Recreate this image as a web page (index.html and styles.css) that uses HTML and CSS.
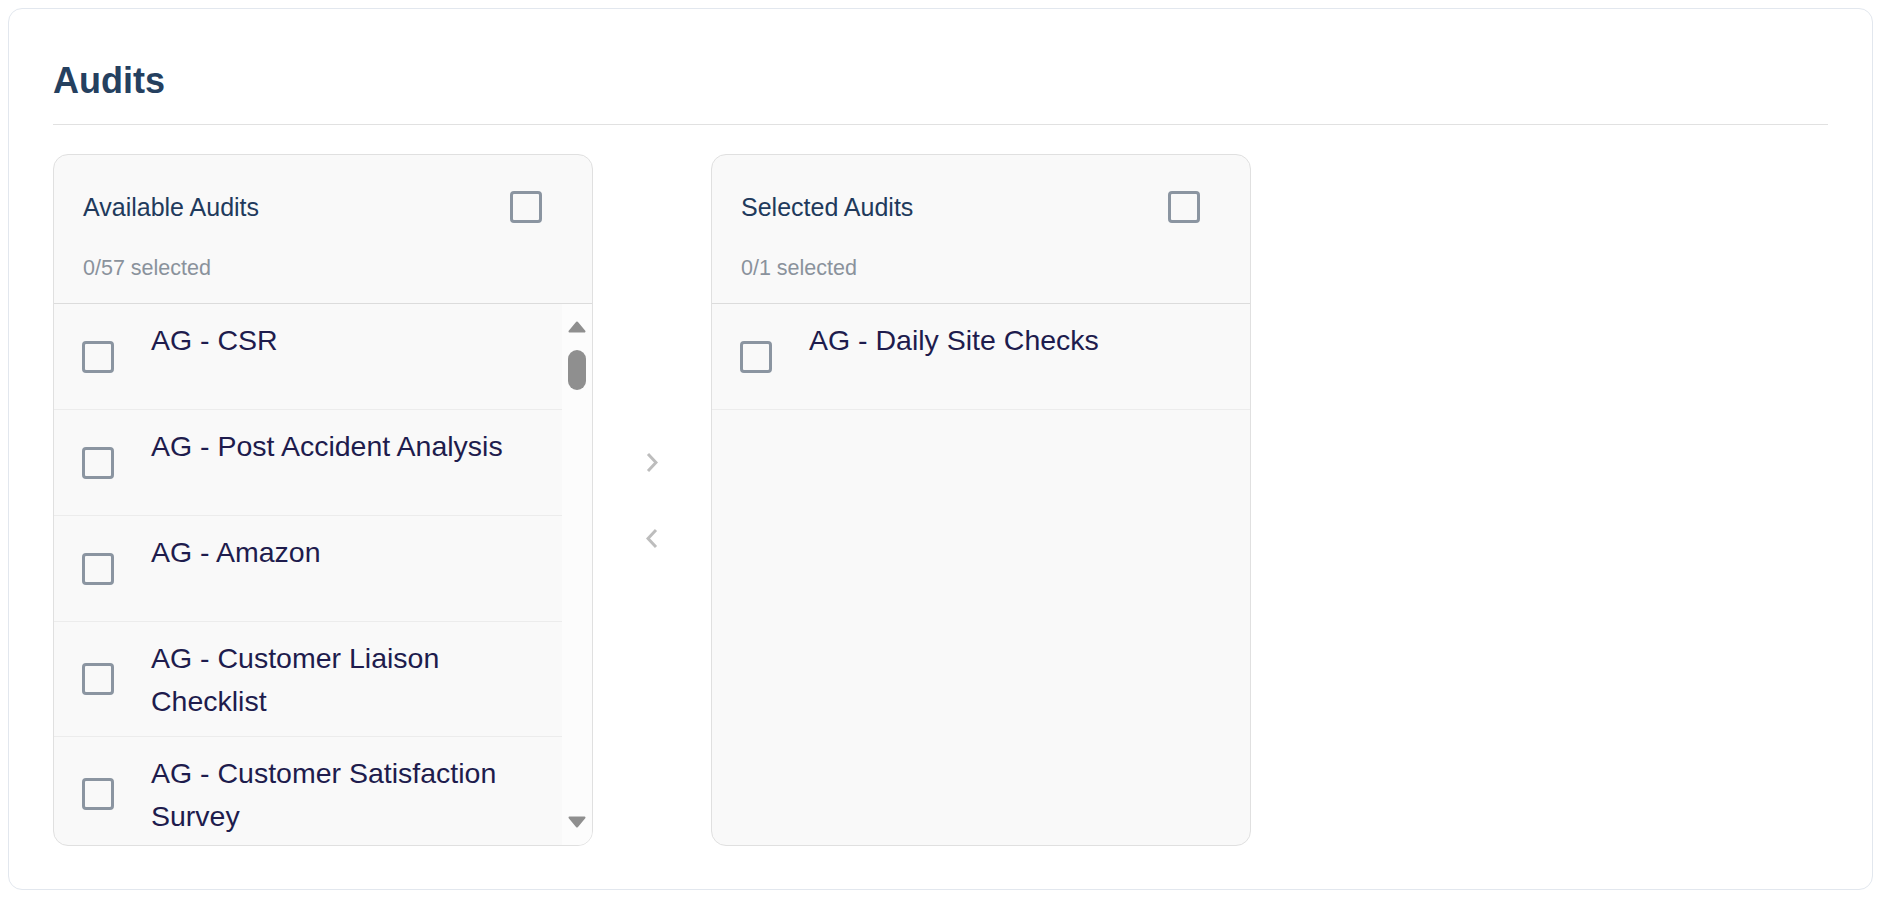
FILE: index.html
```html
<!DOCTYPE html>
<html lang="en">
<head>
<meta charset="UTF-8" />
<meta name="viewport" content="width=device-width, initial-scale=1" />
<title>Audits</title>
<link rel="stylesheet" href="styles.css">
</head>
<body>
  <div class="page">
    <section class="card" aria-label="Audits">
      <h1 class="card-title">Audits</h1>

      <div class="transfer">
        <!-- Available list -->
        <div class="panel">
          <div class="panel-head">
            <div class="panel-head-row">
              <span class="panel-title">Available Audits</span>
              <span class="check"></span>
            </div>
            <div class="panel-count">0/57 selected</div>
          </div>
          <div class="panel-body">
            <ul class="items">
              <li class="item"><span class="check"></span><span class="item-label">AG - CSR</span></li>
              <li class="item"><span class="check"></span><span class="item-label">AG - Post Accident Analysis</span></li>
              <li class="item"><span class="check"></span><span class="item-label">AG - Amazon</span></li>
              <li class="item"><span class="check"></span><span class="item-label">AG - Customer Liaison Checklist</span></li>
              <li class="item"><span class="check"></span><span class="item-label">AG - Customer Satisfaction Survey</span></li>
            </ul>
            <div class="scrollbar" aria-hidden="true">
              <svg class="scroll-arrow" width="18" height="12" viewBox="0 0 18 12"><path d="M9 1.5 L16.5 10.5 L1.5 10.5 Z" fill="#8f8f8f" stroke="#8f8f8f" stroke-width="2" stroke-linejoin="round"/></svg>
              <div class="scroll-thumb"></div>
              <div class="scroll-space"></div>
              <svg class="scroll-arrow" width="18" height="12" viewBox="0 0 18 12"><path d="M9 10.5 L16.5 1.5 L1.5 1.5 Z" fill="#8f8f8f" stroke="#8f8f8f" stroke-width="2" stroke-linejoin="round"/></svg>
            </div>
          </div>
        </div>

        <!-- Move buttons -->
        <div class="moves">
          <button class="move-btn" aria-label="Move right">
            <svg width="12" height="21" viewBox="0 0 12 21"><path d="M2 2 L10 10.5 L2 19" fill="none" stroke="#bdbdbd" stroke-width="3"/></svg>
          </button>
          <button class="move-btn" aria-label="Move left">
            <svg width="12" height="21" viewBox="0 0 12 21"><path d="M10 2 L2 10.5 L10 19" fill="none" stroke="#bdbdbd" stroke-width="3"/></svg>
          </button>
        </div>

        <!-- Selected list -->
        <div class="panel">
          <div class="panel-head">
            <div class="panel-head-row">
              <span class="panel-title">Selected Audits</span>
              <span class="check"></span>
            </div>
            <div class="panel-count">0/1 selected</div>
          </div>
          <div class="panel-body">
            <ul class="items">
              <li class="item"><span class="check"></span><span class="item-label">AG - Daily Site Checks</span></li>
            </ul>
          </div>
        </div>
      </div>
    </section>
  </div>
</body>
</html>
```

FILE: styles.css
```css
/* Base */
* {
  box-sizing: border-box;
}
html, body {
  margin: 0;
  padding: 0;
  background: #fff;
  font-family: "Liberation Sans", Arial, sans-serif;
}

.page {
  padding: 8px 13px 8px 8px;
}

/* Outer card */
.card {
  border: 1px solid #e2e7ee;
  border-radius: 14px;
  padding: 50px 44px 43px 44px;
  background: #fff;
}

.card-title {
  margin: 0;
  padding-bottom: 22px;
  border-bottom: 1px solid #e1e1e1;
  font-size: 36px;
  line-height: 43px;
  font-weight: 700;
  color: #25405f;
}

/* Transfer list */
.transfer {
  display: flex;
  margin-top: 29px;
}

.panel {
  width: 540px;
  height: 692px;
  border: 1px solid #e0e0e0;
  border-radius: 15px;
  background: #f9f9f9;
  display: flex;
  flex-direction: column;
  overflow: hidden;
}

.panel-head {
  padding: 31px 50px 19px 29px;
  border-bottom: 1px solid #dcdcdc;
}

.panel-head-row {
  display: flex;
  align-items: center;
  justify-content: space-between;
  height: 42px;
}

.panel-title {
  font-size: 25px;
  line-height: 37px;
  color: #213a5c;
}

.panel-count {
  margin-top: 25px;
  font-size: 21.5px;
  line-height: 31px;
  color: #8a929c;
}

.check {
  flex: none;
  display: block;
  width: 32px;
  height: 32px;
  border: 3px solid #8b95a1;
  border-radius: 4px;
  background: #f9f9f9;
}

.panel-body {
  flex: 1;
  display: flex;
  min-height: 0;
}

.items {
  flex: 1;
  margin: 0;
  padding: 0;
  list-style: none;
  overflow: hidden;
}

.item {
  display: flex;
  align-items: center;
  min-height: 106px;
  padding-left: 28px;
  border-bottom: 1px solid #ececec;
}

.item-label {
  align-self: flex-start;
  margin-left: 37px;
  padding: 15px 20px 13px 0;
  font-size: 28.5px;
  line-height: 43px;
  color: #1e1c4d;
}

/* Scrollbar of the long list */
.scrollbar {
  flex: none;
  width: 30px;
  padding: 17px 0;
  background: #fcfcfc;
  display: flex;
  flex-direction: column;
  align-items: center;
}

.scroll-arrow {
  display: block;
  flex: none;
}

.scroll-thumb {
  width: 18px;
  height: 40px;
  margin-top: 17px;
  border-radius: 9px;
  background: #8f8f8f;
}

.scroll-space {
  flex: 1;
}

/* Arrows between panels */
.moves {
  width: 118px;
  display: flex;
  flex-direction: column;
  align-items: center;
  justify-content: center;
  gap: 32px;
}

.move-btn {
  width: 44px;
  height: 44px;
  padding: 0;
  border: none;
  background: none;
  display: flex;
  align-items: center;
  justify-content: center;
  cursor: pointer;
}
```
